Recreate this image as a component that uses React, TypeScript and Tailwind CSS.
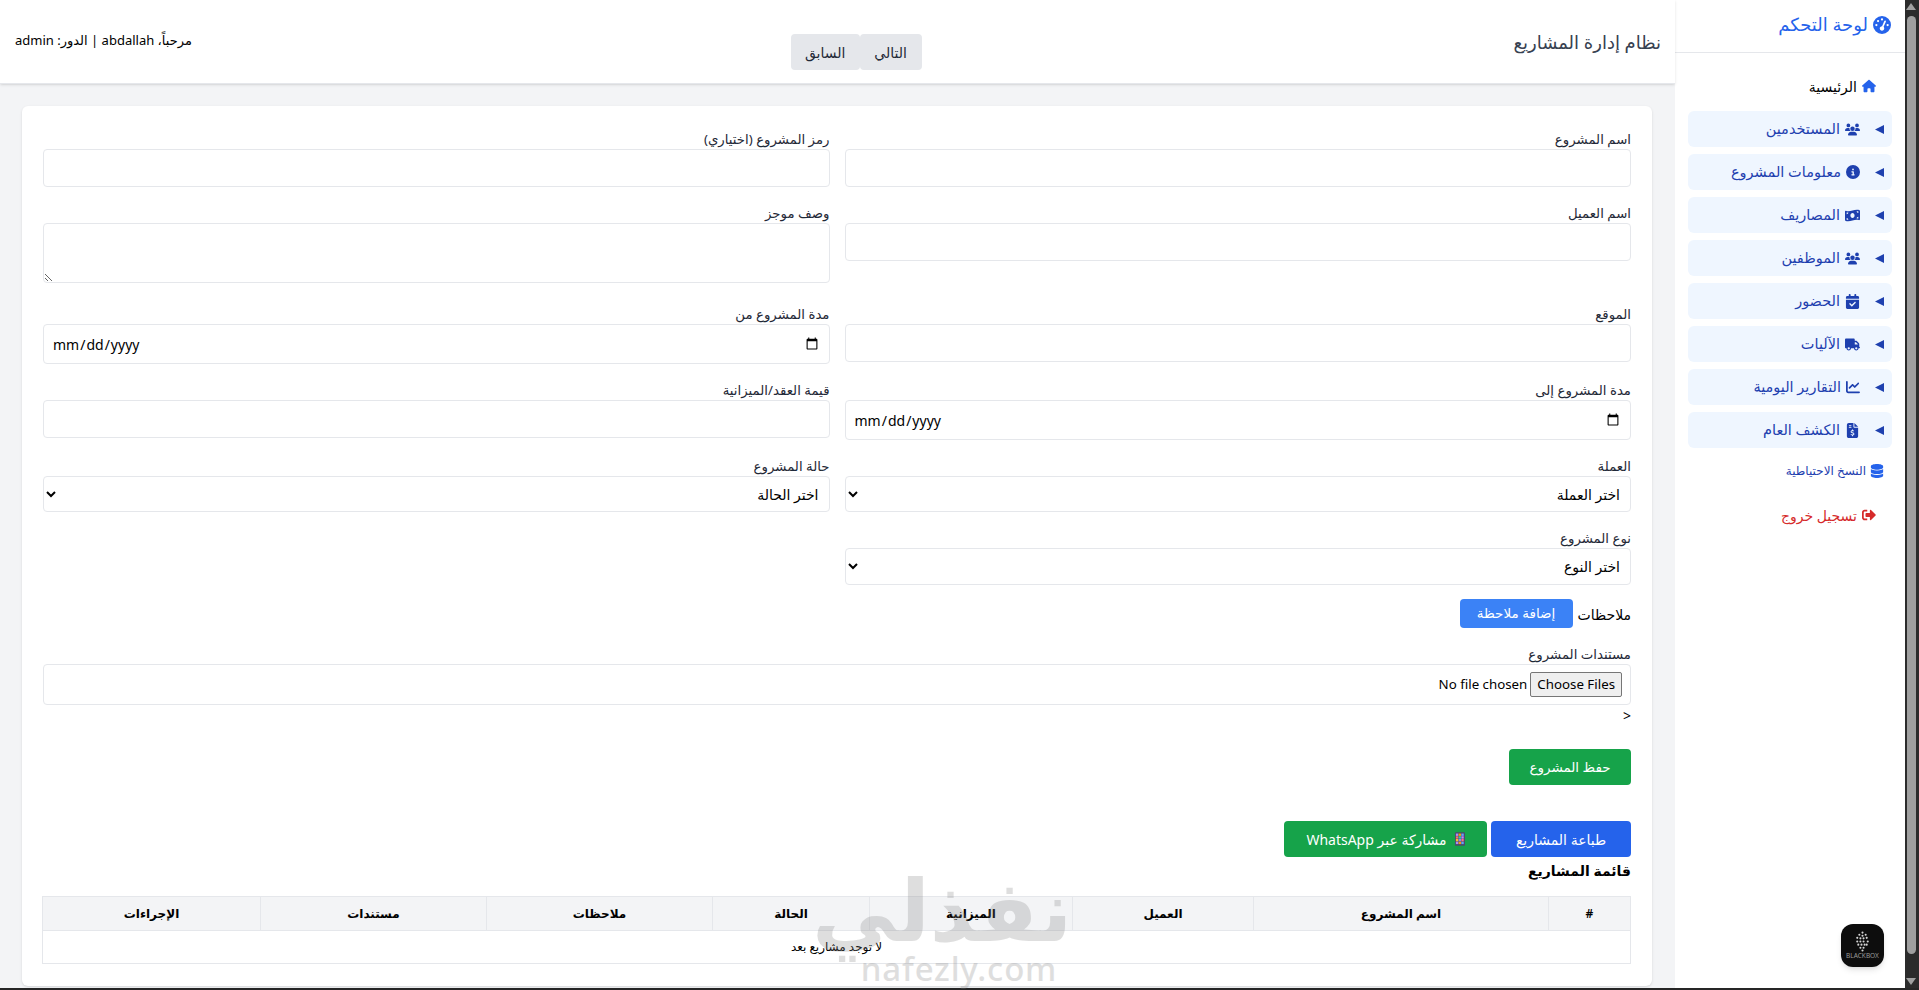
import { FaGaugeHigh, FaHouse, FaUsers, FaCircleInfo, FaMoneyBillWave, FaCalendarCheck, FaTruck, FaChartLine, FaFileInvoiceDollar, FaDatabase } from "react-icons/fa6";
import { FaSignOutAlt } from "react-icons/fa";
import type { IconType } from "react-icons";

const nav: [string, IconType, string][] = [
  ["المستخدمين", FaUsers, "h-[15px]"],
  ["معلومات المشروع", FaCircleInfo, "h-[14px]"],
  ["المصاريف", FaMoneyBillWave, "h-[15px]"],
  ["الموظفين", FaUsers, "h-[15px]"],
  ["الحضور", FaCalendarCheck, "h-[15px]"],
  ["الآليات", FaTruck, "h-[15px]"],
  ["التقارير اليومية", FaChartLine, "h-[14px]"],
  ["الكشف العام", FaFileInvoiceDollar, "h-[15px]"],
];

const cols: [string, string][] = [
  ["#", "w-[82px]"],
  ["اسم المشروع", "w-[295px]"],
  ["العميل", "w-[181px]"],
  ["الميزانية", "w-[203px]"],
  ["الحالة", "w-[157px]"],
  ["ملاحظات", "w-[226px]"],
  ["مستندات", "w-[226px]"],
  ["الإجراءات", "w-[218px]"],
];

const cells = ["#a78bfa", "#f59e0b", "#60a5fa", "#f87171", "#34d399", "#c084fc", "#fbbf24", "#818cf8", "#fb7185", "#a78bfa", "#f59e0b", "#60a5fa"];

const field = "block w-full rounded border border-[#e5e7eb] bg-white px-2 text-[14px] text-black outline-none";

function Label({ children }: { children: string }) {
  return <label className="block h-[24px] text-[13.3px] leading-[28px] text-[#1f2937]">{children}</label>;
}

function Select({ text, h }: { text: string; h: string }) {
  return (
    <select className={`${field} ${h} pr-[6px]`} defaultValue={text} style={{ appearance: "auto" }}>
      <option>{text}</option>
    </select>
  );
}

export default function App() {
  return (
    <div className="flex h-[990px] w-[1919px] flex-col overflow-hidden bg-[#f3f4f6] font-['Noto_Sans','DejaVu_Sans',sans-serif] text-black">
      <div dir="rtl" className="flex h-[988px] shrink-0">
        <div className="flex w-[14px] shrink-0 flex-col items-center bg-[#2b2b2b] pl-0 pr-[2px] pt-[3px]">
          <div className="h-0 w-0 border-x-[5px] border-b-[7px] border-x-transparent border-b-[#a0a0a0]" />
          <div className="mt-[6px] h-[938px] w-[9px] rounded-md bg-[#9f9f9f]" />
          <div className="mt-[24px] h-0 w-0 border-x-[5px] border-t-[7px] border-x-transparent border-t-[#a0a0a0]" />
        </div>

        <aside className="relative flex w-[230px] shrink-0 flex-col bg-white">
          <div className="flex h-[53px] items-center gap-[5px] border-b border-[#e5e7eb] px-[14px] pb-[3px] text-[18px] font-medium text-[#2563eb]">
            <FaGaugeHigh className="size-[18px]" />
            <span>لوحة التحكم</span>
          </div>
          <nav className="flex flex-col pl-[13px] pr-[13px] pt-[15px]">
            <a className="flex h-[36px] items-center gap-[5px] pr-[16px] text-[14px]">
              <FaHouse className="h-[14px] w-auto text-[#2563eb]" />
              <span>الرئيسية</span>
            </a>
            <div className="mt-[7px] flex flex-col gap-[7px]">
              {nav.map(([t, I, h]) => (
                <div key={t} className="flex h-[36px] items-center rounded-md bg-[#eff6ff] pr-[8px] text-[14.5px] font-medium text-[#1e40af]">
                  <svg viewBox="0 0 10 10" className="ml-[15px] size-[9px] shrink-0 fill-current"><polygon points="10,0 10,10 0,5" /></svg>
                  <I className={`ml-[5px] w-auto ${h}`} />
                  <span>{t}</span>
                </div>
              ))}
            </div>
            <a className="mt-[13px] flex h-[20px] items-center gap-1 pr-[8px] text-[12px] text-[#1e40af]">
              <FaDatabase className="h-[14px] w-auto text-[#2563eb]" />
              <span>النسخ الاحتياطية</span>
            </a>
            <a className="mt-[24px] flex h-[20px] items-center gap-[5px] pr-[16px] text-[14px] font-medium text-[#d62b2b]">
              <FaSignOutAlt className="h-[14px] w-auto" />
              <span>تسجيل خروج</span>
            </a>
          </nav>
          <div className="absolute bottom-[21px] right-[21px] flex h-[43px] w-[43px] flex-col items-center justify-center rounded-xl bg-[#0d0d0d] shadow-md">
            <svg viewBox="0 0 20 20" className="size-[21px] fill-[#d4d4d4]">
              {[[10,1.5],[7,3.5],[10,4.5],[13,3.5],[5,6.5],[8,7],[11,7],[14,6.5],[5,10],[8,10],[11,10],[15,10],[6,13],[9,13],[12,13],[14,13],[8,16],[11,16],[10,18.5]].map(([x, y], i) => (
                <circle key={i} cx={x} cy={y} r="1" />
              ))}
            </svg>
            <span dir="ltr" className="text-[6.5px] leading-[8px] text-[#9a9a9a]">BLACKBOX</span>
          </div>
        </aside>

        <main className="relative flex min-w-0 flex-1 flex-col">
          <header className="flex h-[84px] shrink-0 items-start justify-between border-b border-[#e5e7eb] bg-white pl-[15px] pr-[14px] shadow-sm">
            <h1 className="mt-[28px] text-[18px] leading-[28px] font-medium text-[#374151]">نظام إدارة المشاريع</h1>
            <div className="ml-[7px] mt-[34px] flex">
              <button className="h-[36px] w-[62px] rounded bg-[#e5e7eb] text-[14px] text-[#1f2937]">التالي</button>
              <button className="h-[36px] w-[69px] rounded bg-[#e5e7eb] text-[14px] text-[#1f2937]">السابق</button>
            </div>
            <div className="mt-[30px] text-[13px] leading-[20px]">مرحباً، abdallah | الدور: admin</div>
          </header>

          <div className="ml-[22px] mr-[23px] mt-[22px] h-[880px] rounded-md bg-white px-[21px] pt-[19px] shadow-sm">
            <div className="grid grid-cols-2 items-start gap-x-[15px] gap-y-[12px]">
              <div><Label>اسم المشروع</Label><input className={`${field} h-[38px]`} /></div>
              <div><Label>رمز المشروع (اختياري)</Label><input className={`${field} h-[38px]`} /></div>
              <div><Label>اسم العميل</Label><input className={`${field} h-[38px]`} /></div>
              <div><Label>وصف موجز</Label><textarea className={`${field} h-[60px]`} /></div>
              <div className="mt-[5px]"><Label>الموقع</Label><input className={`${field} h-[38px]`} /></div>
              <div className="mt-[5px]"><Label>مدة المشروع من</Label><input type="date" dir="ltr" className={`${field} h-[40px] text-[14.5px]`} /></div>
              <div><Label>مدة المشروع إلى</Label><input type="date" dir="ltr" className={`${field} h-[40px] text-[14.5px]`} /></div>
              <div><Label>قيمة العقد/الميزانية</Label><input className={`${field} h-[38px]`} /></div>
              <div><Label>العملة</Label><Select text="اختر العملة" h="h-[36px]" /></div>
              <div><Label>حالة المشروع</Label><Select text="اختر الحالة" h="h-[36px]" /></div>
              <div><Label>نوع المشروع</Label><Select text="اختر النوع" h="h-[37px]" /></div>
            </div>

            <div className="mt-[13px] flex h-[30px] items-center gap-[5px] text-[14px]">
              <span className="pt-[2px]">ملاحظات</span>
              <button className="h-[29px] w-[113px] rounded bg-[#3b82f6] text-[13.5px] text-white">إضافة ملاحظة</button>
            </div>
            <div className="mt-[12px]"><Label>مستندات المشروع</Label></div>
            <div className="flex h-[41px] items-center rounded border border-[#e5e7eb] px-2 text-[14px]">
              <input type="file" multiple className="w-full text-[13.3px] file:ml-[3px] file:mr-0 file:h-[25px] file:rounded-[2px] file:border file:border-solid file:border-[#767676] file:bg-[#efefef] file:px-[6px] file:text-black" />
            </div>
            <div className="h-[22px] text-[14px] leading-[22px]">&lt;</div>
            <button className="mt-[22px] block h-[36px] w-[122px] rounded bg-[#16a34a] text-[13.5px] text-white">حفظ المشروع</button>

            <div className="mt-[36px] flex gap-[4px]">
              <button className="h-[36px] w-[140px] rounded bg-[#2563eb] text-[14px] text-white">طباعة المشاريع</button>
              <button className="flex h-[36px] w-[203px] items-center justify-center gap-[8px] rounded bg-[#16a34a] text-[14px] text-white">
                <svg viewBox="0 0 11 15" className="h-[14px] w-[10px]">
                  <rect width="11" height="15" rx="1" fill="#4b4b6b" />
                  {cells.map((c, i) => (
                    <rect key={i} x={1 + (i % 3) * 3} y={1.5 + Math.floor(i / 3) * 3} width="2.6" height="2.6" fill={c} />
                  ))}
                </svg>
                <span>مشاركة عبر WhatsApp</span>
              </button>
            </div>
            <h2 className="mt-[2px] h-[37px] text-[14px] leading-[24px] font-bold">قائمة المشاريع</h2>
            <table className="w-full table-fixed border-collapse border border-[#e5e7eb] text-[12px]">
              <thead>
                <tr className="h-[34px] bg-[#f3f4f6]">
                  {cols.map(([c, w]) => (
                    <th key={c} className={`${w} border border-[#e5e7eb] font-semibold`}>{c}</th>
                  ))}
                </tr>
              </thead>
              <tbody>
                <tr className="h-[33px]">
                  <td colSpan={8} className="border border-[#e5e7eb] text-center">لا توجد مشاريع بعد</td>
                </tr>
              </tbody>
            </table>
          </div>

          <div className="pointer-events-none absolute bottom-[3px] left-[853px] flex w-[212px] flex-col items-center text-[#808080] opacity-25">
            <span className="mb-[6px] mr-[34px] text-[85px] leading-[78px] font-bold whitespace-nowrap">نفذلي</span>
            <span dir="ltr" className="text-[33px] leading-[32px] font-medium tracking-wide whitespace-nowrap">nafezly.com</span>
          </div>
        </main>
      </div>
      <div className="h-[2px] shrink-0 bg-[#262626]" />
    </div>
  );
}
